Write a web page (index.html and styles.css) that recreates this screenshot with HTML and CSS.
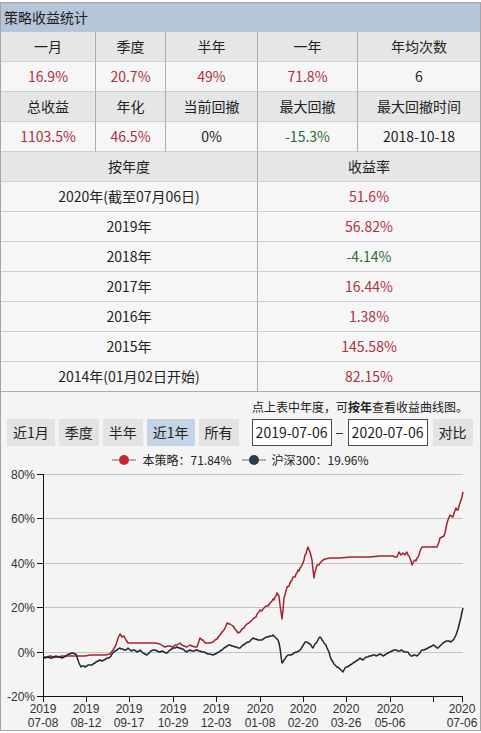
FILE: index.html
```html
<!DOCTYPE html>
<html lang="zh">
<head>
<meta charset="utf-8">
<title>策略收益统计</title>
<link rel="stylesheet" href="styles.css">
</head>
<body>
<div class="panel">
  <div class="title">策略收益统计</div>
  <div class="grid5">
    <div class="cell head">一月</div>
    <div class="cell head">季度</div>
    <div class="cell head">半年</div>
    <div class="cell head">一年</div>
    <div class="cell head last">年均次数</div>
    <div class="cell val up">16.9%</div>
    <div class="cell val up">20.7%</div>
    <div class="cell val up">49%</div>
    <div class="cell val up">71.8%</div>
    <div class="cell val last">6</div>
    <div class="cell head">总收益</div>
    <div class="cell head">年化</div>
    <div class="cell head">当前回撤</div>
    <div class="cell head">最大回撤</div>
    <div class="cell head last">最大回撤时间</div>
    <div class="cell val up">1103.5%</div>
    <div class="cell val up">46.5%</div>
    <div class="cell val">0%</div>
    <div class="cell val down">-15.3%</div>
    <div class="cell val last">2018-10-18</div>
  </div>
  <div class="grid2">
    <div class="cell head">按年度</div>
    <div class="cell head last">收益率</div>
    <div class="cell val">2020年(截至07月06日)</div>
    <div class="cell val up last">51.6%</div>
    <div class="cell val">2019年</div>
    <div class="cell val up last">56.82%</div>
    <div class="cell val">2018年</div>
    <div class="cell val down last">-4.14%</div>
    <div class="cell val">2017年</div>
    <div class="cell val up last">16.44%</div>
    <div class="cell val">2016年</div>
    <div class="cell val up last">1.38%</div>
    <div class="cell val">2015年</div>
    <div class="cell val up last">145.58%</div>
    <div class="cell val">2014年(01月02日开始)</div>
    <div class="cell val up last">82.15%</div>
  </div>
  <div class="note">点上表中年度，可<b>按年</b>查看收益曲线图。</div>
  <div class="toolbar">
    <span class="btn">近1月</span>
    <span class="btn">季度</span>
    <span class="btn">半年</span>
    <span class="btn active">近1年</span>
    <span class="btn">所有</span>
    <span class="date first">2019-07-06</span>
    <span class="dash"><span class="dash-bar"></span></span>
    <span class="date">2020-07-06</span>
    <span class="btn compare">对比</span>
  </div>
  <div class="legend">
    <span class="item">
      <svg class="mark" width="24" height="12" viewBox="0 0 24 12"><line x1="0" y1="6" x2="24" y2="6" stroke="#9a9a9a" stroke-width="1.5"/><circle cx="12" cy="6" r="5" fill="#c9282e"/></svg>
      <span>本策略：71.84%</span>
    </span>
    <span class="item">
      <svg class="mark" width="24" height="12" viewBox="0 0 24 12"><line x1="0" y1="6" x2="24" y2="6" stroke="#9a9a9a" stroke-width="1.5"/><circle cx="12" cy="6" r="5" fill="#2a3b4c"/></svg>
      <span>沪深300：19.96%</span>
    </span>
  </div>
  <svg class="chart" width="479" height="264" viewBox="0 0 479 264">
    <g transform="translate(-1,-466)">
      <g class="grid">
        <line x1="43" y1="474.5" x2="463" y2="474.5"/>
        <line x1="43" y1="518.5" x2="463" y2="518.5"/>
        <line x1="43" y1="563.5" x2="463" y2="563.5"/>
        <line x1="43" y1="607.5" x2="463" y2="607.5"/>
        <line x1="43" y1="652.5" x2="463" y2="652.5"/>
      </g>
      <g class="axis">
        <line x1="43.5" y1="474" x2="43.5" y2="697"/>
        <line x1="43" y1="696.5" x2="463" y2="696.5"/>
        <line x1="37" y1="474.5" x2="43" y2="474.5"/>
        <line x1="37" y1="518.5" x2="43" y2="518.5"/>
        <line x1="37" y1="563.5" x2="43" y2="563.5"/>
        <line x1="37" y1="607.5" x2="43" y2="607.5"/>
        <line x1="37" y1="652.5" x2="43" y2="652.5"/>
        <line x1="37" y1="696.5" x2="43" y2="696.5"/>
        <line x1="43.5" y1="696" x2="43.5" y2="702"/>
        <line x1="86.5" y1="696" x2="86.5" y2="702"/>
        <line x1="129.5" y1="696" x2="129.5" y2="702"/>
        <line x1="173.5" y1="696" x2="173.5" y2="702"/>
        <line x1="216.5" y1="696" x2="216.5" y2="702"/>
        <line x1="260.5" y1="696" x2="260.5" y2="702"/>
        <line x1="303.5" y1="696" x2="303.5" y2="702"/>
        <line x1="346.5" y1="696" x2="346.5" y2="702"/>
        <line x1="390.5" y1="696" x2="390.5" y2="702"/>
        <line x1="433.5" y1="696" x2="433.5" y2="702"/>
        <line x1="462.5" y1="696" x2="462.5" y2="702"/>
      </g>
      <g class="ylab">
        <text x="35" y="478.5">80%</text>
        <text x="35" y="522.5">60%</text>
        <text x="35" y="567.5">40%</text>
        <text x="35" y="611.5">20%</text>
        <text x="35" y="656.5">0%</text>
        <text x="35" y="700.5">-20%</text>
      </g>
      <g class="xlab">
        <text x="43" y="713">2019<tspan x="43" dy="14">07-08</tspan></text>
        <text x="86" y="713">2019<tspan x="86" dy="14">08-12</tspan></text>
        <text x="129" y="713">2019<tspan x="129" dy="14">09-17</tspan></text>
        <text x="173" y="713">2019<tspan x="173" dy="14">10-29</tspan></text>
        <text x="216" y="713">2019<tspan x="216" dy="14">12-03</tspan></text>
        <text x="260" y="713">2020<tspan x="260" dy="14">01-08</tspan></text>
        <text x="303" y="713">2020<tspan x="303" dy="14">02-20</tspan></text>
        <text x="346" y="713">2020<tspan x="346" dy="14">03-26</tspan></text>
        <text x="390" y="713">2020<tspan x="390" dy="14">05-06</tspan></text>
        <text x="462" y="713">2020<tspan x="462" dy="14">07-06</tspan></text>
      </g>
      <polyline class="strat" points="43,657 47,657 50,656 54,657 58,657 62,656 66,656 70,656 75,656 80,656 85,656 90,655 95,655 100,655 105,655 110,654 113,650 116,645 118,638 120,634 122,637 124,636 126,640 128,643 135,643 145,643 155,643 160,644 163,646 165,647 168,646 170,646 173,647 175,645 177,645 180,643 182,645 184,646 187,647 190,645 192,646 195,647 197,647 199,641 200,638 202,640 203,640 205,643 208,643 210,643 213,642 215,640 217,639 219,636 220,635 222,632 224,630 226,626 227,623 229,624 230,624 233,626 235,629 236,630 238,633 240,632 242,629 244,628 245,626 247,624 249,623 250,622 252,620 254,618 256,617 257,614 259,612 260,610 262,611 263,609 265,607 266,606 268,606 270,603 272,601 273,599 274,600 275,597 276,596 277,593 279,596 280,605 282,619 283,610 284,598 286,591 287,587 289,586 290,583 292,580 293,577 295,577 296,574 297,573 298,570 299,571 300,568 301,567 302,565 303,563 304,560 305,555 306,554 307,550 308,547 309,550 310,552 311,556 312,560 313,570 314,578 315,572 316,569 317,565 319,565 320,563 322,561 323,560 325,559 330,558 340,558 350,557 360,557 370,557 380,556 390,556 393,556 395,557 397,557 399,552 401,555 403,553 404,554 405,555 406,553 407,552 408,555 409,556 410,558 411,561 412,565 413,563 414,561 415,560 416,561 417,558 418,557 419,555 420,551 421,549 422,547 426,547 430,547 434,547 437,547 439,542 440,538 442,537 444,536 445,533 446,528 447,523 448,520 450,515 451,516 453,517 454,513 456,508 457,510 458,510 459,506 460,503 461,500 462,497 463,492"/>
      <polyline class="bench" points="43,657 45,658 48,657 50,658 52,658 54,657 56,656 58,657 60,657 62,658 64,657 66,656 67,655 69,654 70,654 72,653 73,653 75,654 76,654 77,657 78,660 79,663 80,665 81,667 82,666 84,666 85,667 87,666 88,665 90,665 92,665 93,664 95,663 96,662 98,661 100,660 102,661 104,660 106,659 107,658 109,658 110,657 111,656 112,654 114,652 115,651 117,650 118,649 120,648 121,649 123,649 124,650 126,650 127,649 128,648 130,650 131,651 133,650 134,650 136,651 137,652 139,651 140,650 142,652 143,653 145,654 147,655 148,654 150,652 151,651 153,650 155,650 157,651 159,652 160,652 162,651 164,652 166,653 167,653 169,651 170,650 172,649 173,648 175,648 177,647 179,648 180,648 182,649 183,649 185,651 187,652 188,651 190,650 192,651 194,651 196,650 197,650 199,651 200,651 202,652 204,652 206,653 208,654 210,654 213,655 215,654 217,653 219,652 220,651 222,650 224,648 226,647 227,646 229,645 230,645 232,646 233,646 235,647 237,647 238,648 240,648 242,646 243,645 245,644 246,643 248,642 249,642 251,640 253,638 255,639 256,639 258,640 260,640 262,640 263,639 265,638 266,637 268,637 270,636 272,636 273,635 275,637 276,638 277,639 278,640 279,643 280,648 281,656 282,663 283,662 284,660 285,659 286,657 287,656 288,655 290,655 291,655 293,654 294,653 296,652 297,652 299,651 300,650 301,649 302,647 304,644 305,642 307,642 308,643 310,644 311,645 312,647 313,648 314,646 315,644 317,642 318,640 319,638 320,637 321,638 322,640 323,641 324,643 326,645 327,648 329,652 330,656 331,659 333,662 334,664 336,666 337,667 339,668 340,669 341,670 342,671 343,672 344,670 345,668 346,667 347,667 349,666 350,665 352,664 353,663 355,662 356,661 358,660 360,658 361,659 363,660 364,659 366,657 368,657 369,656 371,656 373,655 375,655 376,656 378,655 380,654 382,655 383,656 385,655 386,654 388,653 390,652 392,651 394,650 396,650 398,651 400,651 401,650 403,651 404,652 406,652 408,652 409,654 410,655 411,656 412,656 414,655 415,655 417,656 418,655 419,654 420,653 421,651 422,650 424,650 426,649 428,648 430,647 432,646 433,645 435,646 436,647 437,648 438,648 439,647 440,646 442,644 443,643 445,642 446,641 448,641 449,641 451,642 452,641 453,640 454,639 455,637 456,635 457,632 458,629 459,625 460,621 461,617 462,612 463,608"/>
    </g>
  </svg>
</div>
</body>
</html>
```

FILE: styles.css
```css
* {
  box-sizing: border-box;
}

body {
  margin: 0;
  background: #ffffff;
  font-family: "Noto Sans CJK SC", "Microsoft YaHei", sans-serif;
  color: #222222;
}

.panel {
  margin-top: 2px;
  width: 481px;
  border: 1px solid #a4a4a4;
  background: #f4f4f4;
}

.title {
  height: 29px;
  line-height: 29px;
  padding-left: 3px;
  font-size: 14px;
  background: #b4c6d8;
  color: #1e1e1e;
}

.grid5 {
  display: grid;
  grid-template-columns: 95px 70px 92px 100px 1fr;
}

.grid2 {
  display: grid;
  grid-template-columns: 257px 1fr;
}

.cell {
  height: 30px;
  line-height: 29px;
  text-align: center;
  font-size: 14px;
  white-space: nowrap;
  border-bottom: 1px solid #cfcfcf;
  border-right: 1px solid #a9acb0;
}

.cell.last {
  border-right: none;
}

.head {
  background: #e6e6e6;
}

.val {
  background: #f6f6f6;
}

.up {
  color: #b0303c;
}

.down {
  color: #2d6a36;
}

.grid2 .cell:nth-last-child(-n+2) {
  border-bottom-color: #a9acb0;
}

.note {
  margin-top: 7px;
  height: 16px;
  line-height: 16px;
  font-size: 12px;
  text-align: right;
  padding-right: 12px;
  color: #222222;
}

.note b {
  font-weight: bold;
}

.toolbar {
  margin-top: 4px;
  display: flex;
  align-items: center;
  padding-left: 6px;
  height: 27px;
}

.btn {
  height: 27px;
  line-height: 27px;
  padding: 0 6px;
  margin-right: 4px;
  font-size: 14px;
  white-space: nowrap;
  background: #e3e3e3;
}

.btn.active {
  background: #c3d4e5;
}

.date {
  width: 80px;
  height: 27px;
  line-height: 25px;
  font-size: 14px;
  text-align: center;
  background: #ffffff;
  border: 1px solid #4a4a4a;
}

.date.first {
  margin-left: 9px;
}

.dash {
  width: 16px;
  height: 27px;
  display: flex;
  align-items: center;
  justify-content: center;
}

.dash-bar {
  display: block;
  width: 7px;
  height: 1px;
  margin-top: 2px;
  background: #333333;
}

.btn.compare {
  margin-left: 5px;
  margin-right: 0;
}

.legend {
  margin-top: 8px;
  height: 12px;
  display: flex;
  justify-content: center;
  align-items: center;
  gap: 10px;
  font-size: 12px;
  line-height: 12px;
}

.item {
  display: flex;
  align-items: center;
  gap: 6px;
}

.mark {
  display: block;
}

.chart {
  display: block;
  overflow: visible;
}

.grid line {
  stroke: #c4c4c4;
  stroke-width: 1;
}

.axis line {
  stroke: #111111;
  stroke-width: 1;
}

.ylab text {
  font-family: "Liberation Sans", Arial, sans-serif;
  font-size: 12px;
  fill: #333333;
  text-anchor: end;
}

.xlab text {
  font-family: "Liberation Sans", Arial, sans-serif;
  font-size: 12px;
  fill: #333333;
  text-anchor: middle;
}

.strat {
  fill: none;
  stroke: #a3232d;
  stroke-width: 1.5;
  stroke-linejoin: round;
}

.bench {
  fill: none;
  stroke: #1d272e;
  stroke-width: 1.5;
  stroke-linejoin: round;
}
```
